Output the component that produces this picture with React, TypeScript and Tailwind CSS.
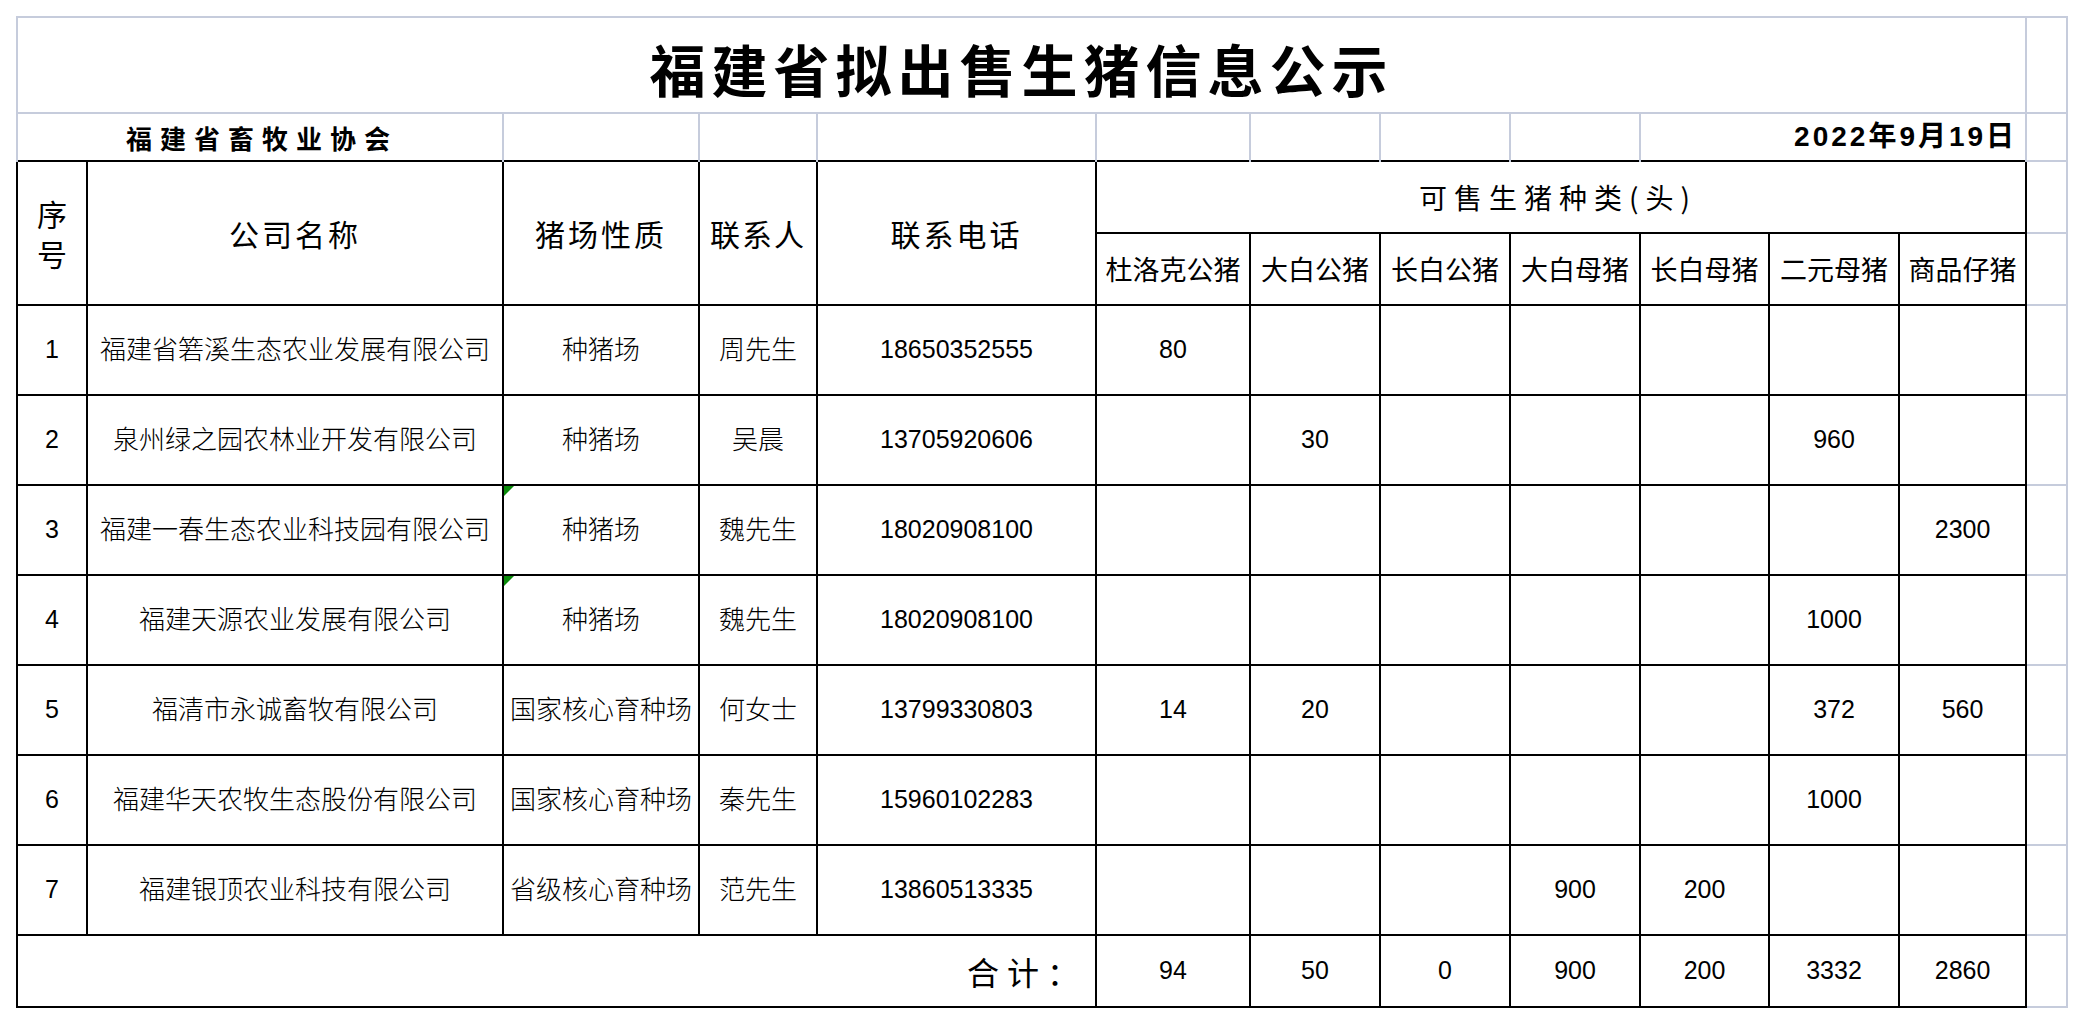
type Row = {
  no: number;
  name: string;
  kind: string;
  contact: string;
  phone: string;
  counts: (number | null)[];
  mark?: boolean;
};

const rows: Row[] = [
  { no: 1, name: "福建省箬溪生态农业发展有限公司", kind: "种猪场", contact: "周先生", phone: "18650352555", counts: [80, null, null, null, null, null, null] },
  { no: 2, name: "泉州绿之园农林业开发有限公司", kind: "种猪场", contact: "吴晨", phone: "13705920606", counts: [null, 30, null, null, null, 960, null] },
  { no: 3, name: "福建一春生态农业科技园有限公司", kind: "种猪场", contact: "魏先生", phone: "18020908100", counts: [null, null, null, null, null, null, 2300], mark: true },
  { no: 4, name: "福建天源农业发展有限公司", kind: "种猪场", contact: "魏先生", phone: "18020908100", counts: [null, null, null, null, null, 1000, null], mark: true },
  { no: 5, name: "福清市永诚畜牧有限公司", kind: "国家核心育种场", contact: "何女士", phone: "13799330803", counts: [14, 20, null, null, null, 372, 560] },
  { no: 6, name: "福建华天农牧生态股份有限公司", kind: "国家核心育种场", contact: "秦先生", phone: "15960102283", counts: [null, null, null, null, null, 1000, null] },
  { no: 7, name: "福建银顶农业科技有限公司", kind: "省级核心育种场", contact: "范先生", phone: "13860513335", counts: [null, null, null, 900, 200, null, null] },
];

const kinds = ["杜洛克公猪", "大白公猪", "长白公猪", "大白母猪", "长白母猪", "二元母猪", "商品仔猪"];

const totals = kinds.map((_, i) => rows.reduce((sum, r) => sum + (r.counts[i] ?? 0), 0));

// spreadsheet gridline cells
const grid = "border-2 border-[#c6ccdc] p-0";
const gridTop = "border-2 border-b-0 border-[#c6ccdc] p-0";
const extra = "border-2 border-l-0 border-[#c6ccdc] p-0";
// table cells
const cell = "border-2 border-black p-0 text-center align-middle";

export default function App() {
  return (
    <div className="min-h-screen bg-white text-black font-['Liberation_Sans','Noto_Sans_CJK_SC',sans-serif]">
      <table className="ml-[16px] mt-[16px] w-[2050px] table-fixed border-collapse">
        <colgroup>
          <col className="w-[70px]" />
          <col className="w-[416px]" />
          <col className="w-[196px]" />
          <col className="w-[118px]" />
          <col className="w-[279px]" />
          <col className="w-[154px]" />
          <col className="w-[130px]" />
          <col className="w-[130px]" />
          <col className="w-[130px]" />
          <col className="w-[129px]" />
          <col className="w-[130px]" />
          <col className="w-[127px]" />
          <col className="w-[41px]" />
        </colgroup>
        <tbody>
          {/* title */}
          <tr className="h-[96px]">
            <td colSpan={12} className={grid + " text-center align-middle"}>
              <span className="relative top-[3px] font-['Noto_Sans_CJK_SC',sans-serif] text-[56px] font-bold tracking-[6px]">
                福建省拟出售生猪信息公示
              </span>
            </td>
            <td className={extra} />
          </tr>

          {/* issuer + date */}
          <tr className="h-[48px]">
            <td colSpan={2} className={gridTop + " text-center align-middle"}>
              <span className="relative left-[2px] font-['Noto_Sans_CJK_SC',sans-serif] text-[26px] font-bold tracking-[8px]">福建省畜牧业协会</span>
            </td>
            <td className={gridTop} />
            <td className={gridTop} />
            <td className={gridTop} />
            <td className={gridTop} />
            <td className={gridTop} />
            <td className={gridTop} />
            <td className={gridTop} />
            <td colSpan={3} className={gridTop + " pr-[8px] text-right align-middle"}>
              <span className="text-[28px] font-bold tracking-[3px]">2022年9月19日</span>
            </td>
            <td className={extra} />
          </tr>

          {/* header */}
          <tr className="h-[72px]">
            <td rowSpan={2} className={cell}>
              <div className="font-['Noto_Sans_CJK_SC',sans-serif] text-[30px] leading-[40px]">
                序<br />号
              </div>
            </td>
            <td rowSpan={2} className={cell + " font-['Noto_Sans_CJK_SC',sans-serif] text-[30px] tracking-[3px]"}>公司名称</td>
            <td rowSpan={2} className={cell + " font-['Noto_Sans_CJK_SC',sans-serif] text-[30px] tracking-[3px]"}>猪场性质</td>
            <td rowSpan={2} className={cell + " font-['Noto_Sans_CJK_SC',sans-serif] text-[30px] tracking-[2px]"}>联系人</td>
            <td rowSpan={2} className={cell + " font-['Noto_Sans_CJK_SC',sans-serif] text-[30px] tracking-[3px]"}>联系电话</td>
            <td colSpan={7} className={cell + " font-['Noto_Sans_CJK_SC',sans-serif] text-[28px] tracking-[7px]"}>
              <span className="relative right-[3px]">可售生猪种类(头)</span>
            </td>
            <td className={extra} />
          </tr>
          <tr className="h-[72px]">
            {kinds.map((k) => (
              <td key={k} className={cell + " whitespace-nowrap font-['Noto_Sans_CJK_SC',sans-serif] text-[27px]"}>
                {k}
              </td>
            ))}
            <td className={extra} />
          </tr>

          {/* data */}
          {rows.map((r) => (
            <tr key={r.no} className="h-[90px]">
              <td className={cell + " text-[25px]"}>{r.no}</td>
              <td className={cell + " whitespace-nowrap text-[26px] font-light"}>{r.name}</td>
              <td className={cell + " relative whitespace-nowrap text-[26px] font-light"}>
                {r.mark && (
                  <span className="absolute left-0 top-0 h-0 w-0 border-r-[10px] border-t-[10px] border-r-transparent border-t-[#0a8a0a]" />
                )}
                {r.kind}
              </td>
              <td className={cell + " whitespace-nowrap text-[26px] font-light"}>{r.contact}</td>
              <td className={cell + " text-[25px]"}>{r.phone}</td>
              {r.counts.map((c, i) => (
                <td key={i} className={cell + " text-[25px]"}>
                  {c ?? ""}
                </td>
              ))}
              <td className={extra} />
            </tr>
          ))}

          {/* totals */}
          <tr className="h-[72px]">
            <td colSpan={5} className={cell + " pr-[8px] text-right"}>
              <span className="font-['Noto_Sans_CJK_SC',sans-serif] text-[32px] tracking-[8px]">合计：</span>
            </td>
            {totals.map((t, i) => (
              <td key={i} className={cell + " text-[25px]"}>
                {t}
              </td>
            ))}
            <td className={extra} />
          </tr>
        </tbody>
      </table>
    </div>
  );
}
